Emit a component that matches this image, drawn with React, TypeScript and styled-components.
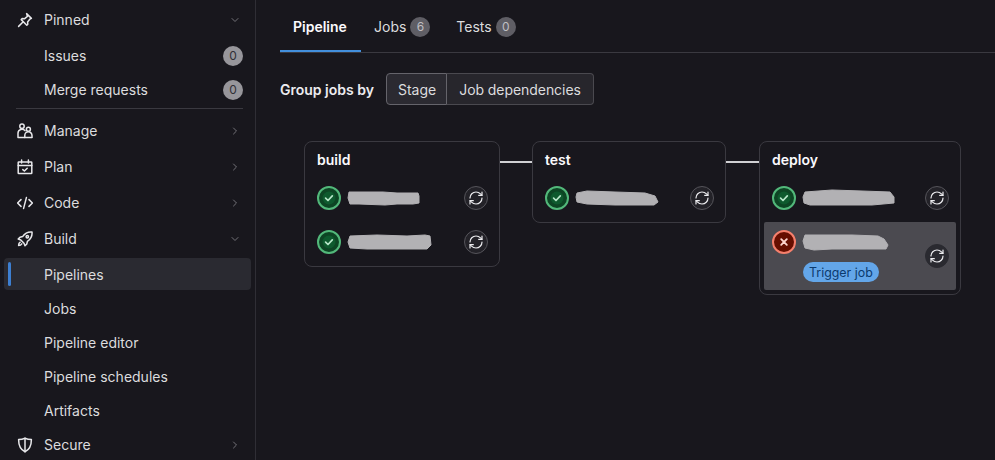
import React from "react";
import styled, { createGlobalStyle } from "styled-components";
import { ChevronDown, ChevronRight, RefreshCw } from "lucide-react";

const Global = createGlobalStyle`
  html, body { margin: 0; padding: 0; height: 100%; background: #18171d; }
  body { font-family: Inter, "Noto Sans", "Liberation Sans", sans-serif; font-size: 14px; color: #ececef; overflow: hidden; }
`;

const Page = styled.div`
  display: flex;
  width: 995px;
  height: 460px;
  overflow: hidden;
  background: #18171d;
`;

const Sidebar = styled.nav`
  width: 256px;
  height: 460px;
  flex: none;
  box-sizing: border-box;
  padding: 2px 4px 0;
  border-right: 1px solid #2f2e35;
  overflow: hidden;
`;

const TopRow = styled.div<{ $compact?: boolean }>`
  display: flex;
  align-items: center;
  height: ${(p) => (p.$compact ? "34px" : "36px")};
  padding: 0 10px 0 13px;
  color: #dcdcde;
`;

const NavIcon = styled.svg`
  width: 16px;
  height: 16px;
  flex: none;
  margin-right: 11px;
  fill: none;
  stroke: #e8e8eb;
  stroke-width: 1.5;
  stroke-linecap: round;
  stroke-linejoin: round;
`;

const Label = styled.span`
  flex: 1;
  line-height: 20px;
`;

const Caret = styled.span`
  display: flex;
  color: #737278;
`;

const SubRow = styled.div<{ $active?: boolean }>`
  position: relative;
  display: flex;
  align-items: center;
  box-sizing: border-box;
  height: ${(p) => (p.$active ? "32px" : "34px")};
  margin-bottom: ${(p) => (p.$active ? "2px" : "0")};
  padding: ${(p) => (p.$active ? "1px" : "0")} 8px 0 40px;
  border-radius: 4px;
  background: ${(p) => (p.$active ? "#2a2a31" : "transparent")};
  color: #dcdcde;
`;

const ActiveMark = styled.span`
  position: absolute;
  left: 4px;
  top: 4px;
  bottom: 4px;
  width: 3px;
  border-radius: 2px;
  background: #3d7fd1;
`;

const CountBadge = styled.span<{ $nav?: boolean }>`
  display: inline-flex;
  align-items: center;
  justify-content: center;
  width: 20px;
  height: 20px;
  border-radius: 50%;
  font-size: 12px;
  line-height: 1;
  background: ${(p) => (p.$nav ? "#97969b" : "#5f5e65")};
  color: ${(p) => (p.$nav ? "#303036" : "#bfbfc3")};
`;

const Divider = styled.div`
  height: 1px;
  margin: 1px 8px 4px 12px;
  background: #3a3940;
`;

const Spacer = styled.div`
  height: 1px;
`;

const Main = styled.main`
  flex: 1;
  min-width: 0;
  padding: 0 0 0 24px;
`;

const Tabs = styled.div`
  display: flex;
  height: 53px;
  box-sizing: border-box;
  border-bottom: 1px solid #3a3940;
`;

const Tab = styled.div<{ $active?: boolean }>`
  display: flex;
  align-items: center;
  gap: 4px;
  height: 52px;
  box-sizing: border-box;
  padding: 3px 13px 0;
  min-width: ${(p) => (p.$active ? "81px" : "0")};
  font-weight: ${(p) => (p.$active ? 600 : 400)};
  color: ${(p) => (p.$active ? "#fbfafd" : "#dcdcde")};
  border-bottom: 2px solid ${(p) => (p.$active ? "#428fdc" : "transparent")};
`;

const GroupBar = styled.div`
  display: flex;
  align-items: center;
  gap: 12px;
  margin-top: 20px;
`;

const GroupLabel = styled.span`
  font-weight: 600;
  color: #ececef;
`;

const Segments = styled.div`
  display: flex;
  height: 32px;
`;

const Segment = styled.div<{ $selected?: boolean }>`
  display: flex;
  align-items: center;
  box-sizing: border-box;
  padding: ${(p) => (p.$selected ? "0 10px 0 11px" : "0 12px")};
  background: ${(p) => (p.$selected ? "#2b2a31" : "#27262c")};
  color: #dcdcde;
  letter-spacing: ${(p) => (p.$selected ? "0" : "-0.06px")};
  border: 1px solid ${(p) => (p.$selected ? "#65646b" : "#4a494f")};
  border-left-width: ${(p) => (p.$selected ? "1px" : "0")};
  border-radius: ${(p) => (p.$selected ? "4px 0 0 4px" : "0 4px 4px 0")};
`;

const Graph = styled.div`
  display: flex;
  align-items: flex-start;
  margin-top: 36px;
  padding-left: 24px;
`;

const Stage = styled.section<{ $width: number }>`
  width: ${(p) => p.$width}px;
  flex: none;
  box-sizing: border-box;
  padding: 4px 4px 2px;
  border: 1px solid #3a3940;
  border-radius: 8px;
`;

const StageTitle = styled.h3`
  margin: 0;
  height: 30px;
  box-sizing: border-box;
  padding: 4px 8px 0;
  font-size: 14px;
  line-height: 20px;
  font-weight: 600;
  color: #fbfafd;
`;

const Connector = styled.div<{ $width: number }>`
  width: ${(p) => p.$width}px;
  height: 2px;
  flex: none;
  margin-top: 20px;
  background: #d0d0d3;
`;

const JobRow = styled.div`
  display: flex;
  align-items: center;
  height: 44px;
  padding: 0 7px 0 8px;
`;

const FailedRow = styled.div`
  display: flex;
  align-items: center;
  box-sizing: border-box;
  height: 68px;
  margin: 2px 0;
  padding: 8px 7px 8px 8px;
  background: #4b4a50;
  border-radius: 2px;
`;

const FailedBody = styled.div`
  flex: 1;
  min-width: 0;
  display: grid;
  grid-template-columns: 24px 1fr;
  grid-template-rows: 24px 20px;
  row-gap: 8px;
  align-self: flex-start;
  align-items: center;
`;

const StatusIcon = styled.svg`
  width: 24px;
  height: 24px;
  flex: none;
`;

const Smudge = styled.svg`
  width: 94px;
  height: 20px;
  flex: none;
  margin-left: 6px;
`;

const Grow = styled.div`
  flex: 1;
`;

const RetryButton = styled.button<{ $raised?: boolean }>`
  width: 24px;
  height: 24px;
  flex: none;
  display: flex;
  align-items: center;
  justify-content: center;
  padding: 0;
  border-radius: 50%;
  background: ${(p) => (p.$raised ? "#2a2a30" : "#232228")};
  border: 1px solid ${(p) => (p.$raised ? "#2a2a30" : "#55545a")};
  color: #ececef;
`;

const TriggerPill = styled.span`
  grid-column: 2;
  justify-self: start;
  margin-left: 7px;
  height: 20px;
  padding: 0 6px;
  display: inline-flex;
  align-items: center;
  border-radius: 10px;
  background: #63a6e9;
  color: #0b3a6e;
  font-size: 12.4px;
`;

const SuccessIcon = () => (
  <StatusIcon viewBox="0 0 24 24">
    <circle cx="12" cy="12" r="11" fill="#0d4524" stroke="#52b87a" strokeWidth="2" />
    <circle cx="12" cy="12" r="6.5" fill="#0e5a2e" />
    <path d="M8.6 12.2l2.4 2.3 4.3-4.6" fill="none" stroke="#b6e6c8" strokeWidth="1.7" strokeLinecap="round" strokeLinejoin="round" />
  </StatusIcon>
);

const FailIcon = () => (
  <StatusIcon viewBox="0 0 24 24">
    <circle cx="12" cy="12" r="11" fill="#660e00" stroke="#f57f6c" strokeWidth="2" />
    <path d="M9.2 9.2l5.6 5.6M14.8 9.2l-5.6 5.6" fill="none" stroke="#fdd4cd" strokeWidth="1.9" strokeLinecap="round" />
  </StatusIcon>
);

const smudges: Record<string, string> = {
  a: "M2 4 L20 4 L36 4 L50 5 L71 5 L72 8 L72 15 L66 16 L50 16 L38 17 L12 16 L3 16 L1 10 Z",
  b: "M3 4 L30 3 L60 4 L78 3 L83 4 L84 13 L80 17 L50 17 L20 17 L3 16 L1 10 Z",
  c: "M2 5 L12 3 L40 4 L70 5 L80 8 L83 14 L79 17 L40 17 L12 16 L2 14 L1 9 Z",
  d: "M3 4 L30 2 L60 3 L88 4 L92 9 L92 15 L70 17 L30 17 L8 17 L2 15 L1 9 Z",
  e: "M3 3 L20 3 L50 3 L76 4 L82 7 L86 13 L84 17 L60 17 L30 17 L12 18 L3 16 L1 9 Z",
};

const Blur = ({ kind }: { kind: string }) => (
  <Smudge viewBox="0 0 94 20">
    <path d={smudges[kind]} fill="#b2b1b4" stroke="#b2b1b4" strokeWidth="1" strokeLinejoin="round" />
  </Smudge>
);

const Retry = ({ raised }: { raised?: boolean }) => (
  <RetryButton $raised={raised} aria-label="Retry">
    <RefreshCw size={16} strokeWidth={1.8} />
  </RetryButton>
);

const Job = ({ kind }: { kind: string }) => (
  <JobRow>
    <SuccessIcon />
    <Blur kind={kind} />
    <Grow />
    <Retry />
  </JobRow>
);

const PinIcon = () => (
  <NavIcon viewBox="0 0 16 16">
    <path d="M9.6 1.6l4.8 4.8-1.4.6-2.4 3 .2 2.2-1 1-5.6-5.6 1-1 2.2.2 3-2.4z" />
    <path d="M5.7 10.3L1.6 14.4" />
  </NavIcon>
);
const ManageIcon = () => (
  <NavIcon viewBox="0 0 16 16">
    <circle cx="5" cy="3.2" r="2.2" />
    <path d="M1 14.6V10a4 4 0 0 1 7-2.4M1 14.6h13.6" />
    <circle cx="11.4" cy="6.2" r="2" />
    <path d="M7.8 14.6v-2.2a3.6 3.6 0 0 1 7.2 0v2.2" />
  </NavIcon>
);
const PlanIcon = () => (
  <NavIcon viewBox="0 0 16 16">
    <rect x="1.2" y="3" width="13.6" height="11.6" rx="0.6" />
    <path d="M1.2 6.4h13.6M4.6 1v3M11.4 1v3M5.8 10.6l1.6 1.4 2.8-2.8" />
  </NavIcon>
);
const CodeIcon = () => (
  <NavIcon viewBox="0 0 16 16">
    <path d="M4 4.6L.6 8 4 11.4M12 4.6L15.4 8 12 11.4M9.4 2.6L6.6 13.4" />
  </NavIcon>
);
const BuildIcon = () => (
  <NavIcon viewBox="0 0 16 16">
    <path d="M15 1c-4-.4-7 1-9.4 4.6L3 6.2 1.2 8l2.6 1 3.2 3.2 1 2.6 1.8-1.8.6-2.6C13.9 8 15.4 5 15 1z" />
    <circle cx="10.3" cy="5.7" r="1.2" />
    <path d="M3.2 11.2c-1 .6-1.6 2-1.6 3.2 1.2 0 2.6-.6 3.2-1.6" />
  </NavIcon>
);
const SecureIcon = () => (
  <NavIcon viewBox="0 0 16 16">
    <path d="M8 1.2c2 .9 4.2 1.3 6.4 1.3 0 6-1.6 10-6.4 12.3C3.2 12.5 1.6 8.5 1.6 2.5 3.8 2.5 6 2.1 8 1.2z" />
    <path d="M8 1.2v13.6" />
  </NavIcon>
);

const Top = ({ icon, label, open, compact }: { icon: React.ReactNode; label: string; open?: boolean; compact?: boolean }) => (
  <TopRow $compact={compact}>
    {icon}
    <Label>{label}</Label>
    <Caret>{open ? <ChevronDown size={12} /> : <ChevronRight size={12} />}</Caret>
  </TopRow>
);

export default function App() {
  return (
    <Page>
      <Global />
      <Sidebar>
        <Top icon={<PinIcon />} label="Pinned" open />
        <Spacer />
        <SubRow>
          <Label>Issues</Label>
          <CountBadge $nav>0</CountBadge>
        </SubRow>
        <SubRow>
          <Label>Merge requests</Label>
          <CountBadge $nav>0</CountBadge>
        </SubRow>
        <Divider />
        <Top icon={<ManageIcon />} label="Manage" />
        <Top icon={<PlanIcon />} label="Plan" />
        <Top icon={<CodeIcon />} label="Code" />
        <Top icon={<BuildIcon />} label="Build" open />
        <Spacer />
        <SubRow $active>
          <ActiveMark />
          <Label>Pipelines</Label>
        </SubRow>
        <SubRow><Label>Jobs</Label></SubRow>
        <SubRow><Label>Pipeline editor</Label></SubRow>
        <SubRow><Label>Pipeline schedules</Label></SubRow>
        <SubRow><Label>Artifacts</Label></SubRow>
        <Top icon={<SecureIcon />} label="Secure" compact />
      </Sidebar>
      <Main>
        <Tabs>
          <Tab $active>Pipeline</Tab>
          <Tab>Jobs <CountBadge>6</CountBadge></Tab>
          <Tab>Tests <CountBadge>0</CountBadge></Tab>
        </Tabs>
        <GroupBar>
          <GroupLabel>Group jobs by</GroupLabel>
          <Segments>
            <Segment $selected>Stage</Segment>
            <Segment>Job dependencies</Segment>
          </Segments>
        </GroupBar>
        <Graph>
          <Stage $width={196}>
            <StageTitle>build</StageTitle>
            <Job kind="a" />
            <Job kind="b" />
          </Stage>
          <Connector $width={32} />
          <Stage $width={194}>
            <StageTitle>test</StageTitle>
            <Job kind="c" />
          </Stage>
          <Connector $width={33} />
          <Stage $width={202}>
            <StageTitle>deploy</StageTitle>
            <Job kind="d" />
            <FailedRow>
              <FailedBody>
                <FailIcon />
                <Blur kind="e" />
                <TriggerPill>Trigger job</TriggerPill>
              </FailedBody>
              <Retry raised />
            </FailedRow>
          </Stage>
        </Graph>
      </Main>
    </Page>
  );
}
